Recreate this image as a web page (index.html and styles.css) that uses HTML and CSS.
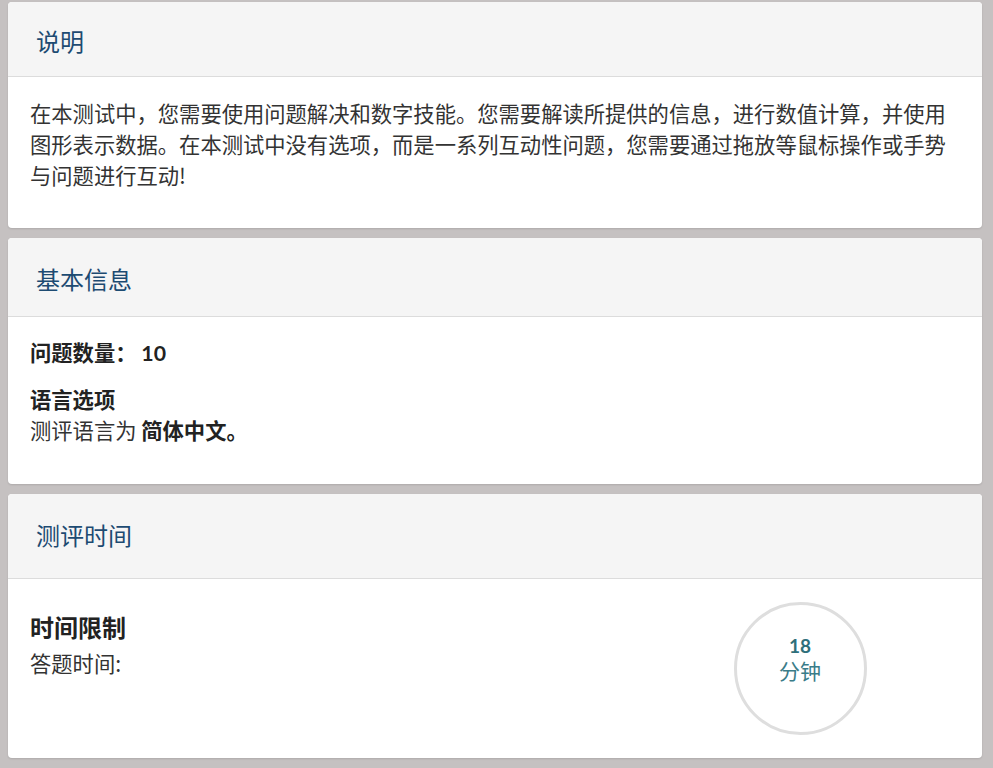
FILE: index.html
```html
<!DOCTYPE html>
<html lang="zh-CN">
<head>
<meta charset="utf-8">
<title>测评说明</title>
<link rel="stylesheet" href="styles.css">
</head>
<body>
<div class="page">
  <section class="card">
    <header class="card-head head-1"><h2 class="card-title">说明</h2></header>
    <div class="card-body body-1">
      <p class="para">在本测试中，您需要使用问题解决和数字技能。您需要解读所提供的信息，进行数值计算，并使用图形表示数据。在本测试中没有选项，而是一系列互动性问题，您需要通过拖放等鼠标操作或手势与问题进行互动!</p>
    </div>
  </section>

  <section class="card">
    <header class="card-head head-2"><h2 class="card-title">基本信息</h2></header>
    <div class="card-body body-2">
      <p class="line strong">问题数量： <span class="num">10</span></p>
      <p class="line strong gap-top">语言选项</p>
      <p class="line">测评语言为 <b class="strong">简体中文。</b></p>
    </div>
  </section>

  <section class="card">
    <header class="card-head head-3"><h2 class="card-title">测评时间</h2></header>
    <div class="card-body body-3">
      <div class="time-info">
        <p class="time-title">时间限制</p>
        <p class="line">答题时间:</p>
      </div>
      <div class="time-col">
        <div class="timer">
          <span class="timer-num">18</span>
          <span class="timer-unit">分钟</span>
        </div>
      </div>
    </div>
  </section>
</div>
</body>
</html>
```

FILE: styles.css
```css
* { box-sizing: border-box; }
html, body {
  margin: 0;
  padding: 0;
  background: #c5c1c1;
}
body {
  font-family: "Noto Sans CJK SC", "Noto Sans", sans-serif;
  color: #333;
}
p, h2 { margin: 0; }

.page {
  display: flex;
  flex-direction: column;
  gap: 10px;
  padding: 2px 11px 10px 8px;
}

.card {
  background: #fff;
  border-radius: 4px;
  box-shadow: 0 1px 2px rgba(0,0,0,0.12);
  overflow: hidden;
}

.card-head {
  background: #f5f5f5;
  border-bottom: 1px solid #dcdcdc;
  display: flex;
  align-items: center;
  padding: 0 28px;
}
.head-1 { height: 75px; padding-top: 3px; }
.head-2 { height: 79px; padding-top: 3px; }
.head-3 { height: 85px; padding-bottom: 2px; }

.card-title {
  font-size: 24px;
  font-weight: 400;
  color: #1d4b72;
  line-height: 30px;
}

.card-body {
  padding: 0 22px;
}
.body-1 { padding-top: 20px; padding-bottom: 38px; }
.body-2 { padding-top: 19px; padding-bottom: 39px; }
.body-3 {
  display: grid;
  grid-template-columns: 1fr 320px;
  padding-top: 23px;
  padding-bottom: 23px;
}

.para, .line {
  font-size: 21.3px;
  line-height: 31px;
  color: #333;
}
.strong {
  font-weight: 700;
  color: #222;
}
.num {
  font-family: Lato, "Noto Sans", sans-serif;
  font-weight: 700;
}
.gap-top { margin-top: 14px; }

.time-info {
  padding-top: 9px;
}
.time-title {
  font-size: 24px;
  line-height: 31px;
  font-weight: 700;
  color: #222;
  margin-bottom: 5px;
}

.time-col {
  display: flex;
  justify-content: center;
}
.timer {
  width: 133px;
  height: 133px;
  border: 3px solid #dedede;
  border-radius: 50%;
  display: flex;
  flex-direction: column;
  align-items: center;
  justify-content: center;
  padding-bottom: 20px;
  color: #3a7c88;
}
.timer-num {
  font-family: Lato, "Noto Sans", sans-serif;
  font-weight: 700;
  font-size: 19px;
  line-height: 22px;
  color: #2f6f7b;
}
.timer-unit {
  font-size: 21px;
  line-height: 26px;
}
```
